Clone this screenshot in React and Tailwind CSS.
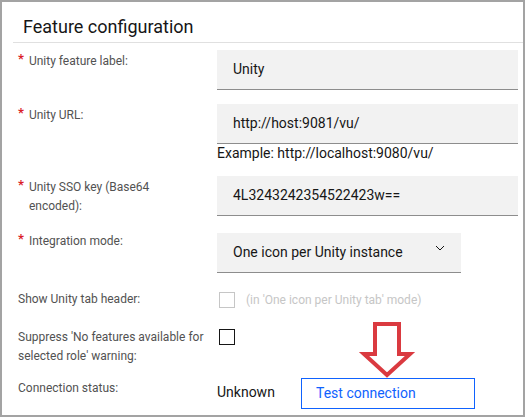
import React from "react";

function Label({ required, children, className = "" }) {
  return (
    <div
      className={`flex items-start text-[12px] leading-[19px] text-[#525252] ${className}`}
    >
      {required && (
        <span className="mr-[5px] -mt-[3px] text-[13px] font-bold text-[#da1e28]">
          *
        </span>
      )}
      <span>{children}</span>
    </div>
  );
}

function TextField({ value }) {
  return (
    <div className="h-10 flex items-center bg-[#f2f2f2] border-b border-[#8d8d8d] pl-4 text-[14px] text-[#161616]">
      {value}
    </div>
  );
}

export default function App() {
  return (
    <div className="relative w-[525px] h-[417px] bg-white border-2 border-[#a3a3a3] overflow-hidden font-['Roboto',sans-serif]">
      <div className="pl-[21px] pt-[12px] pb-[2px] text-[18px] leading-[26px] text-[#161616]">
        Feature configuration
      </div>
      <div className="ml-[11px] h-px bg-[#e0e0e0]" />

      <div className="pl-4 pr-[5px]">
        <div className="mt-[7px] grid grid-cols-[199px_301px]">
          <Label required className="pt-[2px]">
            Unity feature label:
          </Label>
          <TextField value="Unity" />
        </div>

        <div className="mt-[14px] grid grid-cols-[199px_301px]">
          <Label required className="pt-[2px]">
            Unity URL:
          </Label>
          <div>
            <TextField value="http://host:9081/vu/" />
            <div className="h-[18px] text-[14px] leading-[18px] text-[#161616]">
              Example: http://localhost:9080/vu/
            </div>
          </div>
        </div>

        <div className="mt-[14px] grid grid-cols-[199px_301px] h-10">
          <Label required className="pt-[2px]">
            Unity SSO key (Base64
            <br />
            encoded):
          </Label>
          <TextField value="4L3243242354522423w==" />
        </div>

        <div className="mt-[17px] grid grid-cols-[199px_301px]">
          <Label required className="-mt-[1px]">
            Integration mode:
          </Label>
          <div className="w-[244px] h-10 flex items-center justify-between bg-[#f2f2f2] border-b border-[#8d8d8d] pl-4 pr-4 text-[14px] text-[#161616]">
            <span>One icon per Unity instance</span>
            <svg width="10" height="6" viewBox="0 0 10 6" className="-mt-[9px]">
              <path d="M1 1 L5 5 L9 1" fill="none" stroke="#161616" strokeWidth="1" />
            </svg>
          </div>
        </div>

        <div className="mt-[17px] h-[19px] grid grid-cols-[201px_299px] items-center">
          <Label>Show Unity tab header:</Label>
          <div className="flex items-center">
            <div className="w-4 h-4 border border-[#c6c6c6]" />
            <span className="ml-[11px] text-[12px] text-[#c6c6c6]">
              (in 'One icon per Unity tab' mode)
            </span>
          </div>
        </div>

        <div className="mt-[19px] grid grid-cols-[201px_299px]">
          <Label>
            Suppress 'No features available for
            <br />
            selected role' warning:
          </Label>
          <div className="pt-[1px]">
            <div className="w-4 h-4 border border-[#161616]" />
          </div>
        </div>

        <div className="mt-[12px] grid grid-cols-[199px_301px]">
          <Label className="pt-[1px]">Connection status:</Label>
          <div className="flex items-start">
            <span className="mt-[4px] w-[84px] text-[14px] leading-[20px] text-[#161616]">
              Unknown
            </span>
            <button className="w-[174px] h-[31px] border border-[#0f62fe] text-left pl-[14px] text-[14px] text-[#0f62fe]">
              Test connection
            </button>
          </div>
        </div>
      </div>

      <svg
        className="absolute left-[356px] top-[315px] pointer-events-none"
        width="60"
        height="64"
        viewBox="358 316 60 64"
      >
        <path
          d="M375 323 L399 323 L399 353 L410 353 L387 374 L364 353 L375 353 Z"
          fill="none"
          stroke="#da3a40"
          strokeWidth="4"
          strokeLinejoin="miter"
        />
      </svg>
    </div>
  );
}
